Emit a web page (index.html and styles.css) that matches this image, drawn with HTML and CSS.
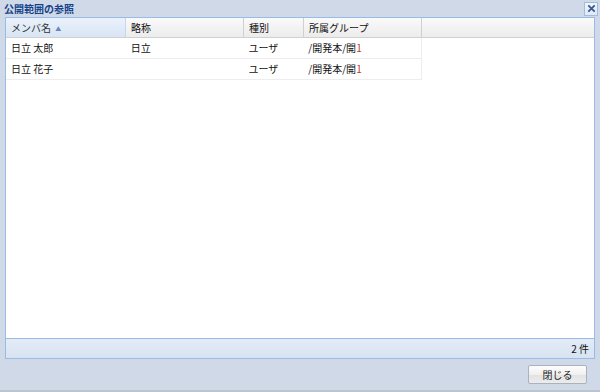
FILE: index.html
```html
<!DOCTYPE html>
<html lang="ja">
<head>
<meta charset="UTF-8">
<title>公開範囲の参照</title>
<link rel="stylesheet" href="styles.css">
</head>
<body>
  <div class="window">
    <div class="win-head">
      <span class="win-title">公開範囲の参照</span>
      <span class="win-close">
        <svg width="12" height="12" viewBox="0 0 12 12"><path d="M2.5 2.5 L9.5 9.5 M9.5 2.5 L2.5 9.5" stroke="#3a5a92" stroke-width="2" fill="none"/></svg>
      </span>
    </div>
    <div class="grid">
      <div class="grid-head">
        <div class="hcell c1 sorted">メンバ名 <span class="arrow">▲</span></div>
        <div class="hcell c2">略称</div>
        <div class="hcell c3">種別</div>
        <div class="hcell c4">所属グループ</div>
        <div class="hcell rest"></div>
      </div>
      <div class="grid-body">
        <div class="row">
          <div class="cell c1">日立 太郎</div>
          <div class="cell c2">日立</div>
          <div class="cell c3">ユーザ</div>
          <div class="cell c4">/開発本/開<span class="num">1</span></div>
        </div>
        <div class="row">
          <div class="cell c1">日立 花子</div>
          <div class="cell c2"></div>
          <div class="cell c3">ユーザ</div>
          <div class="cell c4">/開発本/開<span class="num">1</span></div>
        </div>
      </div>
      <div class="grid-foot">2 件</div>
    </div>
    <div class="win-buttons">
      <button class="btn">閉じる</button>
    </div>
  </div>
</body>
</html>
```

FILE: styles.css
```css
*{
  margin: 0;
  padding: 0;
  box-sizing: border-box;
}
body{
  width: 600px;
  height: 392px;
  background: #cfd9e7;
  font-family: "Noto Sans CJK JP", "Liberation Sans", sans-serif;
  font-size: 10px;
  color: #111;
}
.window{
  height: 392px;
  display: flex;
  flex-direction: column;
  border-bottom: 2px solid #bcc5cf;
  padding: 0 5px;
}
.win-head{
  height: 17px;
  display: flex;
  align-items: center;
  justify-content: space-between;
}
.win-title{
  color: #15428b;
  font-weight: bold;
  font-size: 10px;
  margin-left: -1px;
}
.win-close{
  width: 14px;
  height: 14px;
  margin-right: -3px;
  border: 1px solid #a3bbdc;
  background: linear-gradient(#f2f6fb, #dfe8f4);
  display: flex;
  align-items: center;
  justify-content: center;
}
.win-close svg{
  width: 11px;
  height: 11px;
}
.grid{
  height: 342px;
  border: 1px solid #99bbe8;
  background: #fff;
  display: flex;
  flex-direction: column;
}
.grid-head{
  display: flex;
  height: 20px;
  background: linear-gradient(#fafafa, #ececec);
  border-bottom: 1px solid #d0d0d0;
}
.hcell{
  padding-left: 5px;
  line-height: 19px;
  border-right: 1px solid #d0d0d0;
}
.hcell.sorted{
  background: linear-gradient(#eaf1fb, #d8e5f5);
  border-right-color: #c3d7ee;
  color: #333;
}
.arrow{
  color: #6a86b8;
  font-size: 6px;
  vertical-align: 1px;
  margin-left: 2px;
}
.c1{ width: 120px; }
.c2{ width: 118px; }
.c3{ width: 60px; }
.c4{ width: 118px; }
.hcell.rest{
  flex: 1;
  border-right: none;
}
.grid-body{
  flex: 1;
}
.row{
  display: flex;
  width: 416px;
  height: 21px;
  border-bottom: 1px solid #ededed;
  border-right: 1px solid #ededed;
}
.cell{
  padding-left: 5px;
  line-height: 20px;
}
.num{
  color: #c0392b;
}
.grid-foot{
  height: 20px;
  background: linear-gradient(#e3ebf6, #d8e3f2);
  border-top: 1px solid #99bbe8;
  text-align: right;
  padding-right: 5px;
  line-height: 19px;
}
.win-buttons{
  flex: 1;
  display: flex;
  justify-content: flex-end;
  padding-top: 6px;
  padding-right: 8px;
}
.btn{
  width: 59px;
  height: 19px;
  font-family: inherit;
  font-size: 10px;
  color: #222;
  border: 1px solid #a9b3bf;
  border-radius: 2px;
  background: linear-gradient(#fdfdfd 0%, #f0f0f0 50%, #e2e2e2 51%, #ececec 100%);
}
```
